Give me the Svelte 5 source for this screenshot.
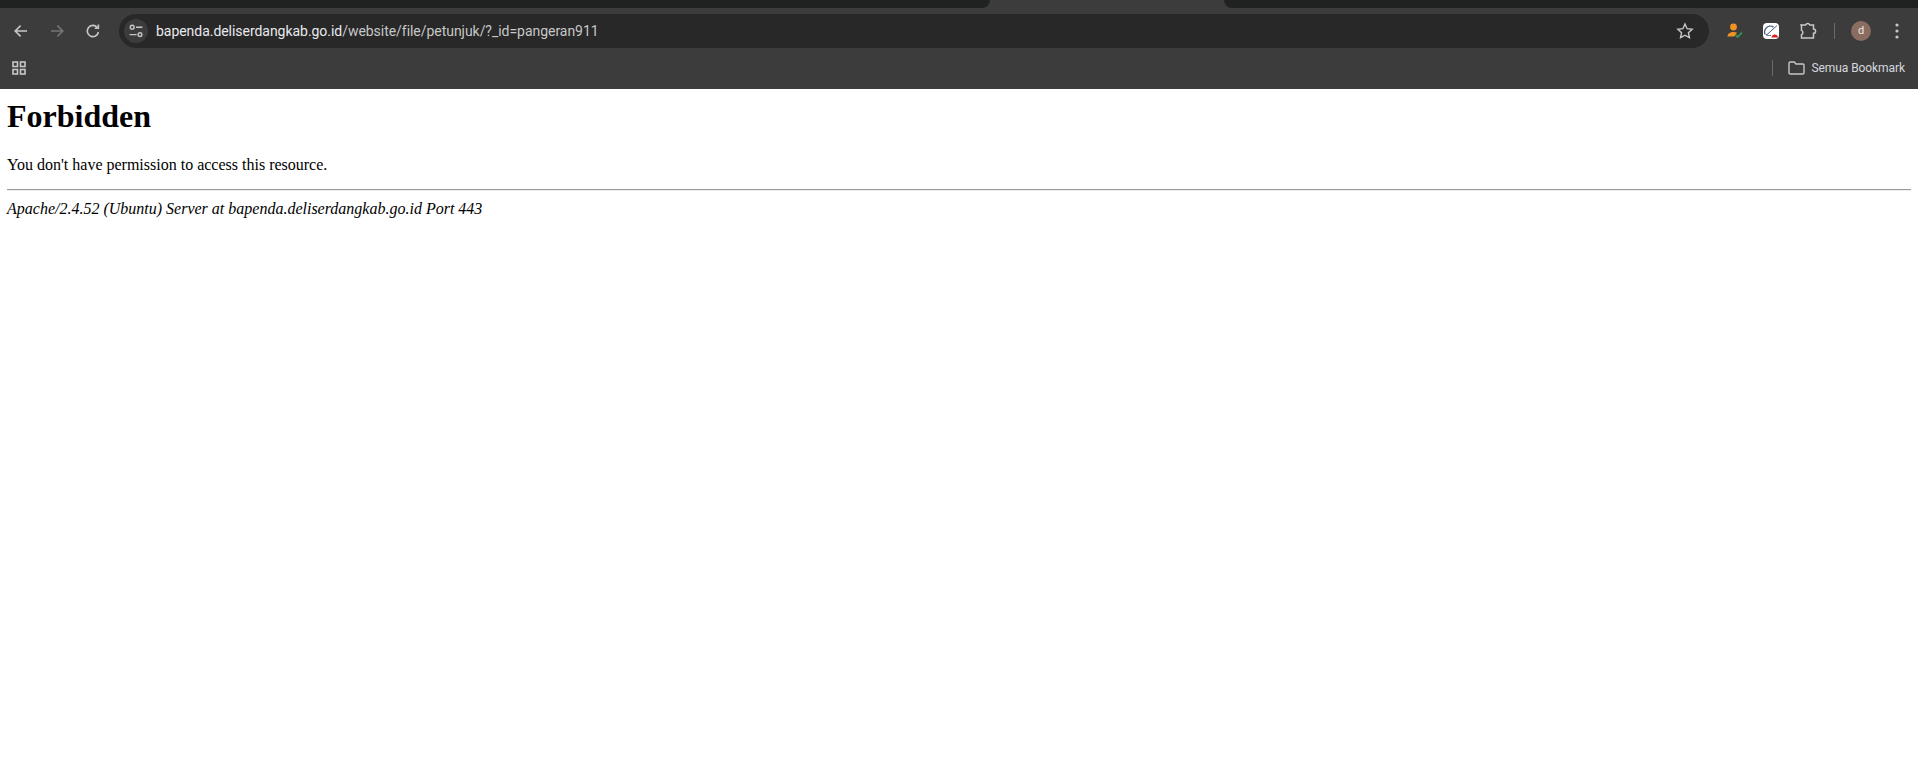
<script lang="ts">
  const host = "bapenda.deliserdangkab.go.id";
  const path = "/website/file/petunjuk/?_id=pangeran911";
</script>

<div class="chrome">
  <div class="tabstrip">
    <span class="tab left"></span>
    <span class="tab active"></span>
    <span class="tab right"></span>
  </div>
  <div class="toolbar">
    <div class="nav">
      <svg width="16" height="16" viewBox="0 0 16 16" class="ic"><path d="M14 8H2.600M7.600 2.600 2.200 8l5.400 5.400" /></svg>
      <svg width="16" height="16" viewBox="0 0 16 16" class="ic dim"><path d="M2 8h11.400M8.400 2.600 13.800 8l-5.400 5.400" /></svg>
      <svg width="16" height="16" viewBox="0 0 16 16" class="ic"><path d="M13.400 9a5.600 5.600 0 1 1-1.300-4.700M13.400 1.600v3.600H9.800" /></svg>
    </div>
    <div class="omnibox">
      <span class="tune">
        <svg width="16" height="16" viewBox="0 0 16 16" class="ic thin">
          <circle cx="4.200" cy="4.200" r="1.900" /><path d="M8 4.200h6.400M1.600 11.600h7" /><circle cx="12" cy="11.600" r="1.900" />
        </svg>
      </span>
      <span class="url"><span class="host">{host}</span>{path}</span>
      <svg width="18" height="18" viewBox="0 0 18 18" class="ic thin star"><path d="m9 2 2.100 4.700 5.100.6-3.800 3.400 1 5L9 13.200l-4.400 2.500 1-5-3.800-3.400 5.100-.6z" /></svg>
    </div>
    <div class="actions">
      <svg width="18" height="18" viewBox="0 0 18 18" class="ext">
        <circle cx="7.500" cy="5" r="3.400" fill="#f29222" />
        <path d="M1.500 14.500c0-3 2.500-4.500 6-4.500 1.500 0 2.700.3 3.500.8l-2.800 3.700z" fill="#f29222" />
        <path d="m9.500 13 2 2 4.500-4.500" fill="none" stroke="#2f9e57" stroke-width="1.600" />
      </svg>
      <span class="gauge">
        <svg width="16" height="16" viewBox="0 0 16 16">
          <path d="M2.200 11.500a5.600 5.600 0 0 1 .9-6.300 5.600 5.600 0 0 1 7.400-1.100" fill="none" stroke="#44597c" stroke-width="1.300" />
          <path d="M3.200 12.300 14 2.600M3 11.500c1.500 1 3 1.200 5 .8" fill="none" stroke="#44597c" stroke-width="1" />
          <path d="M8.500 14.500c.2-1.500 1-3 3.200-3 2 0 3.200 1.400 3.300 3z" fill="#d81f26" />
        </svg>
      </span>
      <svg width="20" height="20" viewBox="0 0 20 20" class="ic puzzle">
        <path d="M3 4h4.700a2.200 2.200 0 0 1 4.100 0h3.700v4.100a2.100 2.100 0 0 1 0 4.200V17H3.500v-3.200a2.400 2.400 0 0 0 0-4.400V5z" />
      </svg>
      <span class="sep"></span>
      <span class="avatar">d</span>
      <svg width="4" height="16" viewBox="0 0 4 16" class="dots"><circle cx="2" cy="2" r="1.600" /><circle cx="2" cy="8" r="1.600" /><circle cx="2" cy="14" r="1.600" /></svg>
    </div>
  </div>
  <div class="bookmarks">
    <svg width="14" height="14" viewBox="0 0 14 14" class="apps">
      <rect x="1" y="1" width="4.500" height="4.500" /><rect x="8.500" y="1" width="4.500" height="4.500" />
      <rect x="1" y="8.500" width="4.500" height="4.500" /><rect x="8.500" y="8.500" width="4.500" height="4.500" />
    </svg>
    <span class="spacer"></span>
    <span class="sep short"></span>
    <svg width="17" height="14" viewBox="0 0 17 14" class="ic thin folder"><path d="M1 2.500C1 1.700 1.500 1 2.300 1h4l1.700 2h7c.6 0 1 .5 1 1v7.700c0 .7-.5 1.300-1.200 1.300H2.200C1.500 13 1 12.400 1 11.700z" /></svg>
    <span class="bm">Semua Bookmark</span>
  </div>
</div>

<main>
  <h1>Forbidden</h1>
  <p>You don't have permission to access this resource.</p>
  <hr />
  <address>Apache/2.4.52 (Ubuntu) Server at bapenda.deliserdangkab.go.id Port 443</address>
</main>

<style>
  :global(body) {
    margin: 0;
    background: #fff;
  }
  .chrome {
    background: #3c3c3c;
    height: 89px;
    font-family: Roboto, "Open Sans", sans-serif;
    overflow: hidden;
  }
  .tabstrip {
    display: flex;
    height: 8px;
    background: #3c3c3c;
  }
  .tab {
    background: #202221;
    height: 8px;
  }
  .tab.left {
    width: 990px;
    border-bottom-right-radius: 10px;
  }
  .tab.active {
    width: 234px;
    background: #3c3c3c;
  }
  .tab.right {
    flex: 1;
    border-bottom-left-radius: 10px;
  }
  .toolbar {
    height: 40px;
    display: flex;
    align-items: center;
  }
  .nav {
    display: flex;
    align-items: center;
    gap: 20px;
    padding-left: 13px;
    padding-top: 6px;
    width: 106px;
    box-sizing: border-box;
  }
  .ic {
    fill: none;
    stroke: #c7c7c7;
    stroke-width: 1.600;
  }
  .ic.dim {
    stroke: #747474;
  }
  .ic.thin {
    stroke-width: 1.400;
  }
  .omnibox {
    width: 1590px;
    margin-left: 13px;
    height: 34px;
    margin-top: 6px;
    border-radius: 17px;
    background: #282828;
    display: flex;
    align-items: center;
    padding: 0 0 0 5px;
    box-sizing: border-box;
  }
  .tune {
    width: 24px;
    height: 24px;
    border-radius: 50%;
    background: #3c3c3c;
    display: flex;
    align-items: center;
    justify-content: center;
  }
  .url {
    margin-left: 8px;
    font-size: 14px;
    letter-spacing: -0.04px;
    color: #c7c7c7;
    flex: 1;
    white-space: nowrap;
  }
  .host {
    color: #e8eaed;
  }
  .star {
    margin-right: 15px;
  }
  .actions {
    display: flex;
    align-items: center;
    flex: 1;
    margin-top: 6px;
    padding-left: 17px;
  }
  .gauge {
    width: 16px;
    height: 16px;
    margin-left: 19px;
    background: #fff;
    border-radius: 4px;
    display: flex;
  }
  .puzzle {
    margin-left: 19px;
    stroke-width: 1.500;
  }
  .sep {
    width: 1px;
    height: 16px;
    background: #6a6a6a;
    margin-left: 16px;
  }
  .avatar {
    width: 20px;
    height: 20px;
    border-radius: 50%;
    background: #8a6c60;
    color: #f0e8e4;
    font-size: 11px;
    text-align: center;
    line-height: 20px;
    margin-left: 16px;
  }
  .dots {
    fill: #c7c7c7;
    margin-left: 24px;
  }
  .bookmarks {
    height: 40px;
    display: flex;
    align-items: center;
    padding-left: 12px;
    padding-right: 13px;
  }
  .apps {
    fill: none;
    stroke: #c7c7c7;
    stroke-width: 1.600;
  }
  .spacer {
    flex: 1;
  }
  .sep.short {
    margin-right: 15px;
  }
  .bm {
    margin-left: 7px;
    font-size: 12px;
    letter-spacing: -0.08px;
    color: #d5d8dc;
  }
  main {
    padding: 9px 7px 8px;
    font-family: "Liberation Serif", "Times New Roman", serif;
    font-size: 16px;
    color: #000;
  }
  h1 {
    font-size: 32px;
    font-weight: 700;
    margin: 0 0 21px;
  }
  p {
    margin: 16px 0 15px;
  }
  hr {
    margin: 8px 0 9px;
    border: 0;
    border-top: 1px solid #9a9a9a;
    border-bottom: 1px solid #eee;
  }
  address {
    font-style: italic;
  }
</style>
